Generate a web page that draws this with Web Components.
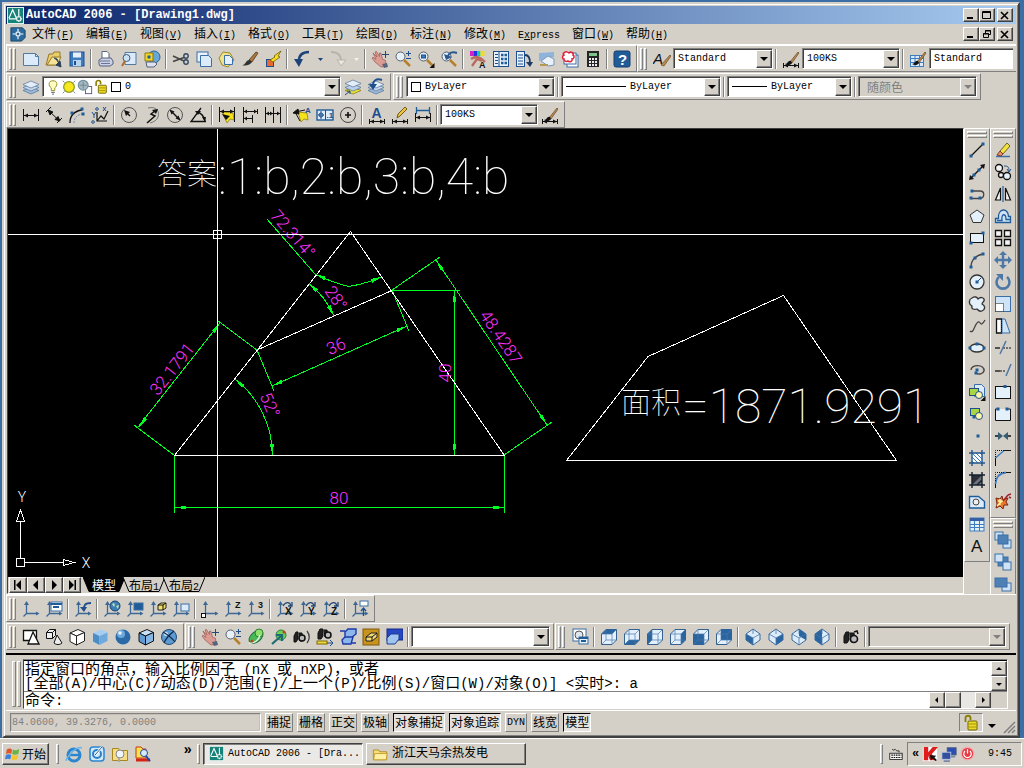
<!DOCTYPE html>
<html lang="zh-CN">
<head>
<meta charset="utf-8">
<title>AutoCAD 2006 - [Drawing1.dwg]</title>
<style>
html,body{margin:0;height:100%}
body{background:#3a6ea5;font:10px/14px "Liberation Mono","Noto Sans CJK SC",monospace;color:#000;overflow:hidden}
</style>
</head>
<body>
<cad-app></cad-app>
<script>
const CJK = /([\u3000-\u9fff\uff00-\uffef]+)/g;
const mix = s => s.replace(CJK, '<span class="c">$1</span>');

const BASE = `
*{box-sizing:border-box}
:host{box-sizing:border-box;display:block}
.c{font-size:12px;font-family:"Noto Sans CJK SC",sans-serif}
button,input,select{font:inherit;color:inherit;margin:0;padding:0;border:0;background:none;border-radius:0}
button{white-space:nowrap}
.up{background:#d4d0c8;border:1px solid;border-color:#fff #404040 #404040 #fff;box-shadow:inset -1px -1px #808080}
svg{display:block;flex:none}
`;

function define(name, css, html) {
  customElements.define(name, class extends HTMLElement {
    constructor() {
      super();
      this.attachShadow({ mode: 'open' });
    }
    connectedCallback() {
      this.shadowRoot.innerHTML = `<style>${BASE}${css}</style>` + (typeof html === 'function' ? html(this) : html);
    }
  });
}

/* ---------- icon set, drawn on an 18 x 18 grid ---------- */
const p = (d, a = '') => `<path d="${d}" ${a}/>`;
const c = (x, y, r, a = '') => `<circle cx="${x}" cy="${y}" r="${r}" ${a}/>`;
const NV = 'stroke="#1f4e8c"', LB = 'fill="#c9e0f8"', MB = 'fill="#4a86c4"', K = 'fill="#111"', NB = 'fill="#1f5c98" stroke="none"';
const dot = (x, y) => `<rect x="${x - 1.5}" y="${y - 1.5}" width="3" height="3" ${NB}/>`;
const brush = p('M8 12 16 2l1 1-7 10z', 'fill="#b98a50" stroke="#6b4a22" stroke-width=".7"') + p('M3 14c3 0 3-4 6-3l1 2c-2 3-5 2-7 1z', K + ' stroke="none"');
const dimbar = p('M1.500 13v5M16.500 13v5M2 15.500h14') + p('M2 15.500l4-2v4zM16 15.500l-4-2v4z', K + ' stroke="none"');
const ucs = p('M4.500 14V3M4.500 13.500H16M4.500 13.500l-3 3', 'stroke="#3d6896" stroke-width="1.300"') + p('M4.500 1 2 5h5zM17.500 13.500 14 11.500v4z', 'fill="#3d6896" stroke="none"');
const layers = p('M9 9 17 12.500 9 16 1 12.500z', 'fill="#9fb9d6" stroke="#50739b" stroke-width=".7"') + p('M9 6 17 9.500 9 13 1 9.500z', 'fill="#c4d6ea" stroke="#50739b" stroke-width=".7"') + p('M9 3 17 6.500 9 10 1 6.500z', 'fill="#e4eef9" stroke="#50739b" stroke-width=".7"');
const hand = p('M2 3l4 4-2-5 1.500-.5 3 5V3l1.500.3 1.500 6 3 1 .5 6-5 .7-6-5-3-4 1-.7 3 2z', 'fill="#dd9c93" stroke="#9b5650" stroke-width=".7"') + p('M11 14l5-1 1 4-4 1z', 'fill="#54657d" stroke="none"');
const mag = p('M10 10l6 6', 'stroke="#b7802c" stroke-width="2.500"') + c(6.500, 6.500, 4.500, 'fill="#e8f0f7" stroke="#555f6c"');
const cross = p('M14.500 1v7M11 4.500h7', 'stroke="#234b78"');
const calc = '<rect x="3" y="1" width="12" height="16" fill="#252525" stroke="none"/><rect x="5" y="3" width="8" height="3" fill="#7fc58a" stroke="none"/>' + p('M5 9h8M5 12h8M5 15h8', 'stroke="#eee" stroke-width="2" stroke-dasharray="2 1"');
const binoc = p('M2 8l2-4h3v8l-2 3H2zM8 5h4l1 9H9z', 'fill="#222"') + c(12, 11, 3.500, 'fill="#bbb" stroke="#111" stroke-width="1.600"');
/* wire cube with one face filled */
const cube = face => {
  const F = { top: 'M1.500 6 6 1.500h10.500L12 6z', bottom: 'M1.500 16.500 6 12h10.500L12 16.500z', left: 'M1.500 6 6 1.500V12l-4.500 4.500z', right: 'M12 6l4.500-4.500V12L12 16.500z', front: 'M1.500 6H12v10.500H1.500z', back: 'M6 1.500h10.500V12H6z' };
  return p('M1.500 6 6 1.500h10.500V12L12 16.500H1.500z', 'fill="#e3f0fd" stroke="#34618f"') + p(F[face], 'fill="#2a659f" stroke="none"') + p('M1.500 6H12v10.500M12 6l4.500-4.500M6 1.500V12h10.500M6 12l-4.500 4.500', 'stroke="#4b7aa9" stroke-width=".7"');
};
/* isometric cube with one face filled */
const iso = d => p('M9 1l7 5v6l-7 5-7-5V6z', 'fill="#dcecfb" stroke="#3c6a9b"') + p(d, 'fill="#2a659f" stroke="none"') + p('M2 6l7 4 7-4M9 10v7M9 1v5', 'stroke="#4677a8" stroke-width=".8"');
const sheet = (x, y, w, h, f = '#fff') => `<rect x="${x}" y="${y}" width="${w}" height="${h}" fill="${f}" stroke="#3a6ea5"/>`;
const box3 = (t, l, r, s) => p('M2 5 10 1.500 16.500 4.500 8.500 8z', `fill="${t}" stroke="${s}"`) + p('M2 5l6.500 3v9L2 13.500z', `fill="${l}" stroke="${s}"`) + p('M8.500 8l8-3.500V13l-8 4z', `fill="${r}" stroke="${s}"`);
const txt = (s, x, y, z, a = '') => `<text x="${x}" y="${y}" font-size="${z}" fill="#111" stroke="none" font-family="Liberation Sans,sans-serif" font-weight="bold" ${a}>${s}</text>`;
const lock = p('M3.500 8V4c0-3 5-3 5 0v2', 'stroke="#8a7d00" stroke-width="1.800"') + '<rect x="6" y="7" width="9" height="9" rx="1" fill="#ecd92b" stroke="#6e6400"/>' + p('M7 10h7M7 13h7', 'stroke="#a59600"');

const ICONS = {
  'new': p('M1.500 3.500h12l3 3v9h-15z', 'fill="#dcebfa" stroke="#557a9f"') + p('M13.500 3.500v3h3', 'stroke="#557a9f"'),
  open: p('M1 15 4 4h4l1-2h6v6l-3 7z', 'fill="#e9cf6a" stroke="#96782a"') + p('M2 15l5-8h9l-4 8z', 'fill="#f4e29b" stroke="#96782a"') + p('M9 8c3 0 4 2 4 4M16 17l-5-2 4-4z', 'fill="#2b3f58" stroke="#2b3f58"'),
  save: '<rect x="2" y="2" width="14" height="14" fill="#3e7cc0" stroke="#1f4e8c"/><rect x="5" y="2.500" width="8" height="5" fill="#e6f1fc" stroke="none"/><rect x="5" y="10" width="8" height="6" fill="#b8d3ef" stroke="none"/><rect x="6" y="11" width="2" height="4" fill="#1f4e8c" stroke="none"/>',
  print: p('M5 8V1.500h5l2 2V9', 'fill="#fff" stroke="#55657f"') + p('M2 10l3-2h9l2 3v3l-3 2H3l-1-2z', 'fill="#ccd2e4" stroke="#55607f"') + p('M3 11h10M4 13.500h9', 'stroke="#687596"'),
  preview: p('M5 2.500h11v12H5z', 'fill="#dbeafa" stroke="#557a9f"') + c(6.500, 8, 3.500, 'fill="#cbe1f4" stroke="#3c5d82"') + p('M5 11l-3 5', 'stroke="#b56a2a" stroke-width="2"'),
  publish: c(11, 7, 6, 'fill="#69a7d9" stroke="#2f6491"') + p('M2 3h8v8H2z', 'fill="#f5d62c" stroke="#8a7a00"') + p('M3 12h9l2 2-3 3H4z', 'fill="#dce1ec" stroke="#55607f"') + dot(6, 7),
  cut: p('M1 6l11 5M1 11.500l11-4', 'stroke="#444" stroke-width="1.500"') + c(14, 6, 2.200, 'stroke="#34495f" stroke-width="1.400"') + c(14, 12, 2.200, 'stroke="#34495f" stroke-width="1.400"'),
  copy: sheet(2, 2, 11, 10, '#eaf3fd') + p('M5.500 5.500h8l3 3v8h-11z', 'fill="#dcebfa" stroke="#3a6ea5"'),
  paste: p('M5 2l7 1 4 7-6 7-6-2-3-7z', 'fill="#f0e28a" stroke="#9b8a2c"') + p('M6.500 5.500h5l3 3v6h-8z', 'fill="#e6f1fc" stroke="#3a6ea5"'),
  match: p('M8 10 15 2l2 1-6 9z', 'fill="#a9793f" stroke="#50371a" stroke-width=".8"') + p('M1 15c4 0 4-6 8-5l2 2c-3 4-7 4-10 3z', 'fill="#333" stroke="none"'),
  blockedit: '<rect x="2.500" y="9.500" width="7" height="7" fill="#e86a32" stroke="#1f4e8c"/>' + p('M6 10l5-3-1-1 7-5-3 5 2 1-7 5z', 'fill="#f8df22" stroke="#6d5c00" stroke-width=".8"'),
  undo: p('M16 2C8 2 6 6 6 11', 'stroke="#1d4378" stroke-width="2.600"') + p('M1 9h9l-4 8z', 'fill="#1d4378" stroke="none"'),
  redo: p('M2 2c8 0 10 4 10 9', 'stroke="#b8b4ac" stroke-width="2"') + p('M8 10h9l-5 6z', 'fill="#e8e6e0" stroke="#b8b4ac"'),
  drop: p('M7 8h5l-2.500 3z', 'fill="#1d4378" stroke="none"'),
  dropoff: p('M7 8h5l-2.500 3z', 'fill="#f4f2ee" stroke="none"'),
  pan: hand + cross, zoomrt: mag + p('M14.500 1v5M12 3.500h5M12 8.500h5', NV),
  zoomwin: mag + '<rect x="4.500" y="5" width="4" height="3" fill="#3e7cc0" stroke="#1f4e8c"/>' + p('M17.500 13v5h-5z', K + ' stroke="none"'),
  zoomprev: mag + p('M17 3c-5-2-8 0-9 3', 'stroke="#2a5790" stroke-width="2"') + p('M4 4l2 6 6-3z', 'fill="#2a5790" stroke="none"'),
  props: '<rect x="1" y="1" width="3.500" height="5" fill="#d223c8" stroke="none"/><rect x="4.500" y="1" width="3.500" height="5" fill="#2233dd" stroke="none"/><rect x="8" y="1" width="3.500" height="5" fill="#18c8b0" stroke="none"/><rect x="11.500" y="1" width="4" height="5" fill="#f0dc20" stroke="none"/>' + p('M2 9c5-3 8-3 14 3M3 16l5-7 5 2', 'stroke="#b96b5c" stroke-width="2.400"') + txt('A', 10, 17.500, 9),
  dc: '<rect x="1.500" y="1.500" width="15" height="15" fill="#e6f1fc" stroke="#1f4e8c"/>' + p('M7 2v14M3 4.500h3M3 7.500h3M3 10.500h3M3 13.500h3', NV) + '<path d="M9 5h6M9 9h6M9 13h6" stroke="#1f5c98" stroke-width="2.400" stroke-dasharray="2.500 1"/>',
  palettes: '<rect x="1.500" y="1.500" width="8" height="15" fill="#e6f1fc" stroke="#1f4e8c"/>' + p('M3 5h5M3 8h5M3 11h5M3 14h5', NV) + p('M10 5c4 0 5 3 5 8', 'stroke="#1d3a66" stroke-width="1.800"') + p('M11 12h7l-3 5z', 'fill="#1d3a66" stroke="none"'),
  sheetset: p('M1 3l15-1v5L1 11z', 'fill="#8fb4dc" stroke="none"') + p('M3 11l7-5 6 3v6l-6 1z', 'fill="#e9f1fa" stroke="#7e97b5"') + p('M2 15h8', 'stroke="#b59a55" stroke-width="2"'),
  markup: sheet(6, 5, 11, 12) + sheet(3, 3, 12, 11) + p('M3 3c2-2 4-1 5 0 2-2 5 0 4 2 2 1 1 4-1 4 1 3-3 3-4 2-2 1-4 0-4-2-2 0-2-3 0-4-1-1-1-2 0-2z', 'fill="#fff" stroke="#e0203c" stroke-width="1.500"'),
  calc, help: '<rect x="1" y="1" width="16" height="16" rx="2" fill="#1f5c98" stroke="#183f70"/>' + txt('?', 5, 15, 15, 'style="fill:#fff"'),
  textstyle: txt('A', 0, 14, 15, 'style="font-weight:normal" font-style="italic"') + p('M8 15 17 5l1 1-7 10z', 'fill="#b98a50" stroke="#6b4a22" stroke-width=".7"'),
  dimstyle: brush + dimbar,
  tablestyle: '<rect x="1.500" y="5.500" width="13" height="11" fill="#dcebfa" stroke="#3e7cc0"/>' + p('M1 8.500h14M1 12.500h14M6 5v12M10.500 5v12', 'stroke="#3e7cc0"') + brush,
  layers, layprev: layers + p('M15 2C9 0 6 3 6 7', 'stroke="#1f4e8c" stroke-width="2"') + p('M2 6h8l-4 6z', 'fill="#1f4e8c" stroke="none"'),
  laycur: p('M9 9 17 12.500 9 16 1 12.500z', 'fill="#e9df34" stroke="#8a8220" stroke-width=".8"') + p('M9 6 17 9.500 9 13 1 9.500z', 'fill="#bcd2ea" stroke="#50739b" stroke-width=".7"') + p('M9 2 17 5.500 9 9 1 5.500z', 'fill="#e4eef9" stroke="#50739b" stroke-width=".7"') + p('M1 17l5-4M3 13h3v3', NV),
  bulb: p('M9 2c-6 0-5 6-2 8v3h4v-3c3-2 4-8-2-8z', 'fill="#fffcc0" stroke="#8c8420"') + p('M7 15h4M8 17h2', 'stroke="#444"'),
  sun: c(9, 9, 6, 'fill="#f6e71f" stroke="#8f9b1c" stroke-width="1.400"') + p('M2 2l2 2M16 2l-2 2M2 16l2-2M16 16l-2-2', 'stroke="#5b7a9a"'),
  freeze: '<rect x="9.500" y="8.500" width="7" height="8" fill="#fff" stroke="#557"/>' + c(7, 7, 5.500, 'fill="#a7b9c0" stroke="#7494a2" stroke-width="1.400"') + p('M7 3v8M3 7h8', 'stroke="#6a8793"'),
  lock, lin: p('M1.500 3v12M16.500 3v12M2 9.500h14') + p('M2 9.500l4-2v4zM16 9.500l-4-2v4z', K + ' stroke="none"'),
  aligned: p('M1 6l5-5M12 17l5-5M3.500 4.500l10.500 10') + p('M3 4l5 2-3 3zM15 15l-5-1.500 3-3z', K),
  arclen: p('M2 17c0-8 5-12 12-13', 'stroke-width="1.300"') + p('M6 17c0-5 3-8 8-9', 'stroke="#7391b0" stroke-dasharray="2 1"') + dot(4, 7) + dot(14, 3) + dot(15, 8),
  ordinate: p('M6 6v9h10M6 15l4-5 3 3 4-8', 'stroke-width="1.200"') + c(6, 3, 1.300, NV) + c(2, 16, 1.300, NV) + p('M12 1l3 4M15 1l-3 4M1 6l2 3M5 6l-2 3v3', NV),
  radius: c(9, 9, 7.500, 'stroke="#555"') + p('M10 10 6 6', 'stroke-width="1.500"') + p('M4 4l6 2-4 4z', K + ' stroke="none"'),
  jogged: p('M5 2c8-2 12 3 10 9-1 3-4 5-8 6', 'stroke="#777"') + p('M13 4 8 8l4 2-8 7', 'stroke-width="1.500"') + p('M15 3l-6 1 4 4z', K + ' stroke="none"'),
  diameter: c(9, 9, 7.500, 'stroke="#555"') + p('M5 5l8 8', 'stroke-width="1.500"') + p('M3.500 3.500l5 2-3 3zM14.500 14.500l-5-2 3-3z', K + ' stroke="none"'),
  angular: p('M12 2 2 15.500h15M8 6c4 1 7 4 8 9', 'stroke-width="1.300"') + p('M6 5l6 0-3 4zM16 16l-3-5h4z', K + ' stroke="none"'),
  quick: p('M4 6l11 1 1 7-4-1-3 4z', 'fill="#f5e11c" stroke="#8a7a00" stroke-width=".7"') + p('M1.500 1v15M16.500 1v15M2 5.500h14') + p('M2 5.500l4-2v4zM16 5.500l-4-2v4zM4 8l8 2-4 4z', K + ' stroke="none"'),
  baseline: p('M2.500 1v16M3 5.500h13M3 12.500h8M16.500 3v5M11.500 9v8') + p('M3 5.500l3-2v4zM16 5.500l-3-2v4zM3 12.500l3-2v4z', K + ' stroke="none"'),
  cont: p('M1.500 1v16M9.500 1v16M16.500 1v16M2 7.500h15') + p('M2 7.500l3-2v4zM9 7.500l-3-2v4zM16 7.500l-3-2v4z', K + ' stroke="none"'),
  leader: p('M5 6l9 1 1 7-4-1-3 3z', 'fill="#f5e11c" stroke="#8a7a00" stroke-width=".7"') + p('M12 4 2 6l5 9') + p('M0 7l5-4 1 5z', K) + txt('A', 12, 7, 8, 'style="fill:#1f4e8c"'),
  tolerance: '<rect x="1" y="4" width="16" height="10" fill="#dcecfb" stroke="#1f5c98" stroke-width="1.400"/>' + p('M9.500 4v10M2 9h6M5 5v8', NV) + c(5, 9, 2, NV) + txt('.1', 10.500, 12, 8, 'style="fill:#1f4e8c"'),
  center: c(9, 9, 7.500, 'stroke="#444"') + p('M9 6v6M6 9h6', 'stroke-width="1.600"'),
  dimedit: txt('A', 3.500, 12, 14, 'style="fill:#1f4e8c"') + dimbar,
  dimtedit: p('M6 12l1-4 7-7 2 2-7 7z', 'fill="#e9c43c" stroke="#705b15"') + dimbar,
  dimupdate: p('M2.500 1v7M15.500 1v7M3 4.500h12', 'stroke="#1f5c98" stroke-width="1.300"') + p('M1.500 7v9M16.500 7v9M2 11.500h14') + p('M2 11.500l4-2v4zM16 11.500l-4-2v4z', K + ' stroke="none"'),
  line: p('M3 15 15 3', 'stroke-width="1.300"') + dot(3, 15) + dot(15, 3),
  xline: p('M3 15 15 3', 'stroke-width="1.500"') + p('M1 17l1-5 4 4zM17 1l-5 1 4 4z', K + ' stroke="none"') + dot(6, 12) + dot(11, 7),
  pline: p('M3 13.500h8M5 6h7c5 0 5 7 0 7.500', 'stroke="#444" stroke-width="1.300"') + dot(3, 13) + dot(12, 13) + dot(4, 6),
  polygon: p('M9 3l7 5-3 7.500H5L2 8z', 'fill="#e4f1fb" stroke="#333"'),
  rect: '<rect x="2.500" y="4.500" width="13" height="9" fill="#e4f1fb"/>' + dot(3, 14) + dot(15, 4),
  arc: p('M3 16C3 9 8 4 15 3', 'stroke="#444" stroke-width="1.300"') + dot(3, 16) + dot(7, 7) + dot(15, 3),
  circle: c(9, 9, 7, 'fill="#e4f1fb" stroke="#333" stroke-width="1.300"') + p('M9 9l4-4', NV) + dot(9, 9),
  cloud: p('M4 3c3-2 5-1 6 1 3-3 7-1 6 2-1 1-2 2-2 3 4 2 3 6 0 7-3 1-4-1-5-2-3 1-6 0-5-3-4-2-3-7 0-8z', 'fill="#e4f1fb" stroke="#333" stroke-width="1.300"'),
  spline: p('M2 14c4 4 5-10 9-9 2 1 2 5 6-2', 'stroke="#444" stroke-width="1.300"'),
  ellipse: '<ellipse cx="9" cy="9" rx="7" ry="4" fill="#e4f1fb" stroke="#333" stroke-width="1.300"/>' + dot(2, 9) + dot(16, 9) + dot(9, 5),
  ellarc: p('M3 9c0-6 14-6 13 1-1 3-5 4-8 2', 'stroke="#444" stroke-width="1.400"') + dot(9, 9) + dot(8, 12),
  insert: p('M6.500 1.500h7l3 3v9h-10z', 'fill="#dcebfa" stroke="#3a6ea5"') + '<rect x="1.500" y="5.500" width="9" height="7" fill="#a9d645" stroke="#1f4e8c"/>' + c(11, 12, 3.500, 'fill="#fff8a8" stroke="#1f4e8c"') + p('M17.500 13v5h-5z', K + ' stroke="none"'),
  block: '<rect x="2.500" y="3.500" width="9" height="7" fill="#a9d645" stroke="#1f4e8c"/>' + c(11, 11, 3.500, 'fill="#fff8a8" stroke="#1f4e8c"') + dot(6, 12),
  point: dot(10, 9),
  hatch: '<rect x="4" y="4" width="10" height="10" fill="#fff" stroke="none"/>' + p('M4 8l6 6M4 4l10 10M8 4l6 6M4 12l2 2M12 4l2 2', 'stroke="#3e7cc0"') + p('M4 1v16M14 1v16M1 4h16M1 14h16', 'stroke="#23568c" stroke-width="1.400"'),
  gradient: '<rect x="4" y="4" width="10" height="10" fill="#6d7178" stroke="none"/>' + p('M4 14V4h10z', 'fill="#2b3039" stroke="none"') + p('M4 1v16M14 1v16M1 4h16M1 14h16M9 14l5-5', 'stroke="#14202f" stroke-width="1.400"'),
  region: p('M1.500 3.500h9l6 5v6.500h-15z', 'fill="#dcebfa" stroke="#1f5c98" stroke-width="1.400"') + c(8, 9, 3, 'fill="#eee" stroke="#444"'),
  table: '<rect x="2" y="3" width="14" height="13" fill="#e4f1fb" stroke="#3e7cc0"/><rect x="2" y="3" width="14" height="3" fill="#3560a4" stroke="none"/>' + p('M2 9.500h14M2 12.500h14M6.500 6v10M11.500 6v10', 'stroke="#3e7cc0"'),
  mtext: '<text x="3" y="15" font-size="17" fill="#111" stroke="none" font-family="Liberation Sans,sans-serif">A</text>',
  erase: p('M2 15.500h14', 'stroke="#3e6ea8" stroke-width="1.500"') + p('M6 10 13 2l3 3-7 8z', 'fill="#f4e13c" stroke="#6f6520"') + p('M6 10l3 3-2 2-4-1z', 'fill="#e89070" stroke="#7a3c22"'),
  copyo: c(5, 5, 3.500, 'fill="#f4f4f4" stroke-width="1.300"') + c(7, 12, 2.500, 'fill="#f4f4f4" stroke-width="1.300"') + c(13, 13, 3.500, 'fill="#e4f1fb" stroke-width="1.300"') + p('M10 3c4 0 5 1 5 5M13 6l2 3 2-3', NV),
  mirror: p('M9 1v16', 'stroke="#3a6ea5" stroke-width="1.400"') + p('M6.500 3v12h-5zM11.500 3v12h5z', 'fill="#f4f4f4" stroke-width="1.200"'),
  offset: p('M1.500 15.500v-4h3c-1-11 10-11 10-2h2v6z', 'fill="#cfe3f7" stroke="#1f5c98" stroke-width="1.300"') + p('M3 13.500h5c-1-8 4-7 4-1h4', 'stroke="#1f5c98" stroke-width="1.300"'),
  array: p('M1.500 1.500h6v6h-6zM10.500 1.500h6v6h-6zM1.500 10.500h6v6h-6zM10.500 10.500h6v6h-6z', 'fill="#f4f4f4" stroke="#111" stroke-width="1.300"'),
  move: p('M9 2v14M2 9h14', 'stroke="#4d77a6" stroke-width="2.400"') + p('M9 0l4 4H5zM9 18l4-4H5zM0 9l4-4v8zM18 9l-4-4v8z', 'fill="#4d77a6" stroke="none"'),
  rotate: p('M5 4a6.500 6.500 0 1 0 8 0', 'stroke="#4d77a6" stroke-width="2.600"') + p('M2 1h7v7z', 'fill="#4d77a6" stroke="none"'),
  scale: '<rect x="1.500" y="1.500" width="15" height="15" fill="#cfe3f7" stroke="#3a6ea5"/><rect x="1.500" y="8.500" width="8" height="8" fill="#fff" stroke="#111" stroke-dasharray="1 1"/>',
  stretch: p('M2.500 2v14h5V2z', 'fill="#fff" stroke-width="1.300"') + p('M8 2h3l5 14H8z', 'fill="#cfe3f7" stroke="#3a6ea5"') + p('M7.500 2v14', 'stroke-dasharray="1 1"'),
  trim: p('M1 9h5', 'stroke-width="1.300"') + p('M9 9h9', 'stroke-dasharray="2 1"') + p('M12 2 6 15', 'stroke="#4d77a6" stroke-width="1.500"'),
  extend: p('M1 10h5', 'stroke-width="1.300"') + p('M6 10h6', 'stroke-dasharray="2 1"') + p('M17 3l-5 12', 'stroke="#4d77a6" stroke-width="1.500"'),
  breakpt: '<rect x="1.500" y="3.500" width="15" height="12" fill="#e4f1fb"/>' + dot(11, 3.500),
  brk: p('M5 4H1.500v11.500h15V4H13', 'fill="#e4f1fb"') + dot(4, 4) + dot(13, 4),
  join: p('M1 9h4M13 9h4', 'stroke-width="1.500"') + p('M4 5l5 4-5 4zM14 5l-5 4 5 4z', 'fill="#345c75" stroke="none"'),
  chamfer: p('M1.500 17V9M10 1.500h7') + p('M1.500 9 10 1.500', 'stroke="#3e7cc0" stroke-width="1.500"') + p('M1.500 8V1.500H10', 'stroke-dasharray="1 1"'),
  fillet: p('M1.500 17v-4M12 1.500h5') + p('M1.500 13C2 6 6 2 12 1.500', 'stroke="#3e7cc0" stroke-width="1.800"') + p('M1.500 10V1.500H10', 'stroke-dasharray="1 1"'),
  explode: p('M2 5l4 1 2-3 1 4 5-2-2 4 2 3-4 0-1 4-3-3-4 2 1-4z', 'fill="#e8782c" stroke="#7b2414"') + p('M4 8h5M6 6v6M3 13l5-5', 'stroke="#fff4a0" stroke-width="1.400"') + p('M9 8l5-6M14 2l3-1M15 4l2 1', 'stroke="#a3212d" stroke-width="1.500"'),
  front: sheet(1, 1, 8, 8, '#cfe3f7') + sheet(9, 9, 8, 8, '#cfe3f7') + sheet(4, 4, 10, 9, '#4f80b5'),
  backo: sheet(4, 4, 10, 9, '#4f80b5') + sheet(1, 1, 8, 8, '#cfe3f7') + sheet(9, 9, 8, 8, '#cfe3f7'),
  above: sheet(8, 8, 9, 8, '#cfe3f7') + sheet(1, 3, 12, 9, '#4f80b5'),
  ucs, ucsdlg: ucs + sheet(6, 2, 11, 9) + p('M6 4h11M8 7h6', 'stroke="#1f5c98" stroke-width="2"'),
  ucsprev: ucs + p('M17 3c-6 0-7 2-7 6', 'stroke="#1f4e8c" stroke-width="1.800"') + p('M6 7h7l-3 5z', 'fill="#1f4e8c" stroke="none"'),
  world: ucs + c(12, 6, 5, 'fill="#3b7fb5" stroke="#183f70"') + p('M9 4c2-2 4 0 2 3zM13 6l3-1-1 4z', 'fill="#bfe0b4" stroke="none"'),
  ucsobj: ucs + sheet(8, 3, 9, 7, '#1f5c98'),
  ucsface: ucs + p('M9 5l3-2h5v5l-3 2H9z', 'fill="#f2df6a" stroke="#222"') + p('M9 5h5v5M14 5l3-2'),
  ucsview: ucs + sheet(9, 4, 8, 7, '#dcebfa'),
  origin: ucs + '<rect x=".5" y="13.500" width="4" height="4" fill="#fff"/>',
  zaxis: ucs + txt('Z', 11, 8, 9), point3: ucs + txt('3', 11, 8, 9),
  ...Object.fromEntries(['X', 'Y', 'Z'].map(a => ['rot' + a, ucs + p('M7 6c3-5 7-4 8 0M16 2v4h-4', 'stroke="#234b78" stroke-width="1.300"') + txt(a, 9, 15, 10)])),
  ucsapply: ucs + sheet(9, 1, 8, 5) + p('M12.500 16V8M10 11l2.500-3 2.500 3', 'stroke="#1f4e8c" stroke-width="1.400"'),
  wire2: p('M1.500 2.500h13v10h-13z', 'fill="#fff" stroke-width="1.300"') + p('M11 4l6 12H6z', 'fill="#fff" stroke-width="1.300"'),
  wire3: p('M1.500 4.500h6v6h-6zM1.500 4.500l3-3h6v6l-3 3M7.500 4.500l3-3M12 7l5 8c-2 2-6 2-8 0z', 'fill="#eee"'),
  hidden: box3('#fff', '#fff', '#fff', '#222'), flat: box3('#a6cef2', '#4a8cc8', '#6faadf', 'none'),
  gouraud: c(9, 9, 7.500, 'fill="#2b6aa6" stroke="none"') + c(7, 6, 4, 'fill="#6fa9dc" stroke="none"') + c(6, 5, 1.800, 'fill="#e8f4ff" stroke="none"'),
  flatedge: box3('#c6e0f7', '#5f9bd2', '#84b7e4', '#111'),
  gouraudedge: c(9, 9, 7.500, 'fill="#5d9ad0" stroke="#234b78"') + c(6, 6, 2, 'fill="#d9ebfb" stroke="none"') + p('M3 4c5 3 9 6 12 10M14 3c-5 4-8 7-10 12', 'stroke="#10294a" stroke-width="1.200"'),
  orbit: '<ellipse cx="9" cy="9" rx="8" ry="5" transform="rotate(-40 9 9)" fill="#48b954" stroke="#1d7040"/>' + c(12, 5, 4, 'fill="#8ee06a" stroke="#27803a"') + p('M2 15c5 1 10-3 11-8', 'stroke="#e5f7e8" stroke-width="1.400"') + c(5, 13, 1.500, 'fill="#b8461c" stroke="none"'),
  corbit: c(11, 7, 5, 'fill="#6fcf57" stroke="#27803a"') + p('M2 16l9-8M6 7l6 0v6', 'stroke="#1d6b73" stroke-width="2.200"') + c(14, 4, 1.500, 'fill="#b8461c" stroke="none"'),
  swivel: p('M1 8l2-4h2v7l-2 3H1zM6 5h3l1 8H7z', 'fill="#222"') + c(9, 10, 3, 'fill="#bbb" stroke="#111" stroke-width="1.500"') + p('M14 3c3 4 3 8 0 12', 'stroke="#444" stroke-width="1.300"'),
  distance: p('M2 5l2-4h3v7l-2 3H2zM8 2h3l1 7H9z', 'fill="#222"') + c(12, 7, 3, 'fill="#bbb" stroke="#111" stroke-width="1.500"') + '<rect x="1" y="13" width="10" height="3" fill="#f0d83c" stroke="#7a6a00"/>' + p('M11 15h6M14 12l3 3-3 3', NV),
  clip: p('M6 4l3-3h8v5l-4 3H6zM3 12l3-3h8l-2 7H4z', 'fill="#8db7ec" stroke="#1b39a8" stroke-width="1.400"') + p('M1 3h5M17 15h-4', 'stroke="#1b39a8" stroke-width="1.400"'),
  frontclip: '<rect x="1" y="1" width="16" height="16" fill="#c8931d" stroke="#7c5909"/>' + p('M4 9l5-4h6v4l-5 4H4z', 'fill="#f3d877" stroke="#222"') + p('M4 9h6v4M10 9l5-4'),
  backclip: '<rect x="2" y="1" width="16" height="11" fill="#2747c4" stroke="#132b82"/>' + p('M2 10l4-4h8v5l-4 5H2z', 'fill="#9fc4ee" stroke="#1c3f93"'),
  namedv: sheet(2, 1, 13, 12) + c(8, 7, 4, 'fill="#dfe6ee" stroke="#555"') + sheet(8, 9, 9, 7, '#e6f1fc') + p('M8 10h9M10 13h5', 'stroke="#1f5c98" stroke-width="1.800"'),
  top: cube('top'), bottom: cube('bottom'), left: cube('left'), right: cube('right'), frontv: cube('front'), backv: cube('back'),
  sw: iso('M2 6l7 4v7l-7-5z'), se: iso('M16 6l-7 4v7l7-5z'), ne: iso('M9 1l7 5v6L9 8z'), nw: iso('M9 1L2 6v6l7 5z'),
  camera: binoc + p('M12 4l3-1 1 3', 'stroke-width="1.500"'),
  cad: '<rect width="18" height="18" fill="#eef6f4" stroke="none"/><rect x="1" y="1" width="16" height="16" fill="#16837a" stroke="none"/>' + p('M2 12 6 3l4 9M2 12.500h14M12.500 2v14', 'stroke="#fff" stroke-width="1.300"') + '<rect x="10.500" y="10.500" width="4" height="4" stroke="#fff" fill="#16837a"/>',
  dwg: p('M1 2h13l3 3v8l-4 4H1z', 'fill="#2a6a9e" stroke="#123f68"') + p('M9 3v12M3 9h12', 'stroke="#fff" stroke-width="1.300"') + '<rect x="7" y="7" width="4" height="4" fill="#2a6a9e" stroke="#fff"/>',
  ie: c(9, 10, 6, 'stroke="#2c85cf" stroke-width="3"') + p('M4 10h10', 'stroke="#2c85cf" stroke-width="2.400"') + p('M2 15C-2 18 10 0 17 3', 'stroke="#67b5ea" stroke-width="1.500"'),
  desktop: '<rect x="2" y="2" width="14" height="14" rx="3" fill="#cfe9fb" stroke="#2c85cf" stroke-width="1.500"/>' + c(9, 9, 4, 'stroke="#2c7fc4" stroke-width="2"') + p('M7 10l7-8', 'stroke="#fff" stroke-width="2.400"') + p('M7 10l7-8', 'stroke="#265f95"'),
  folder: p('M1.500 4.500h6l1 2h8v9h-15z', 'fill="#fbe07a" stroke="#a8861e"') + p('M3 8.500h14l-1 7H2z', 'fill="#fff0a6" stroke="#c49b28"'),
  findfolder: p('M1.500 3.500h6l1 2h8v10h-15z', 'fill="#f6dd84" stroke="#a8861e"') + c(9, 9, 4, 'fill="#eef6fb" stroke="#888"') + p('M8 13v4', 'stroke="#aaa" stroke-width="2"'),
  findred: p('M2 2h5l2 2h3v9H2z', 'fill="#fbe34a" stroke="#c23b16"') + c(10, 8, 3.500, 'fill="#d7ecfb" stroke="#2244aa"') + p('M2 15h14', 'stroke="#d42416" stroke-width="3"') + p('M12 11l4 5', 'stroke="#2244aa" stroke-width="2"'),
  flag: p('M2 4c3-2 4-1 6 0L7 9C5 8 4 8 1 9z', 'fill="#e2552b" stroke="none"') + p('M9 4c2 1 4 1 7-1l-1 6c-3 1-5 1-7 0z', 'fill="#6cb33f" stroke="none"') + p('M1 10c2-1 4-1 6 0l-1 5c-2-1-4-1-6 0z', 'fill="#3e7fd9" stroke="none"') + p('M8 10c2 1 4 1 7 0l-1 5c-3 1-5 1-7 0z', 'fill="#f4c62c" stroke="none"'),
  keyboard: p('M4 3l2 1 2-1 2 2h3v2') + '<rect x="1" y="8" width="16" height="8" fill="#f4f4f4"/>' + p('M3 10.500h13M3 13.500h13', 'stroke-width="1.600" stroke-dasharray="2 1"'),
  kav: '<rect x="1" y="1" width="16" height="16" fill="#fff" stroke="none"/>' + p('M2 1h5v6l5-6h6l-7 8 4 7H9L7 11v5H2z', 'fill="#e01b1b" stroke="none"') + p('M9 10l7 1-2 2 3 3-2 1-3-3-2 2z', K + ' stroke="none"'),
  net: '<rect x="7" y="2" width="10" height="8" fill="#2a4fb3" stroke="#46557e"/><rect x="1" y="7" width="10" height="8" fill="#33509f" stroke="#c0c8e0"/>' + p('M3 17h7M11 12h5', 'stroke="#7a86a8" stroke-width="2"'),
  power: c(9, 9, 7.500, 'fill="#e63a45" stroke="#f7a8ac" stroke-width="1.500"') + p('M6 6a4.500 4.500 0 1 0 6 0M9 4v5', 'stroke="#fff" stroke-width="1.500"'),
};
const svg = (name, size = 18) => `<svg width="${size}" height="${size}" viewBox="0 0 18 18" fill="none" stroke="#111" aria-hidden="true">${ICONS[name] || ''}</svg>`;

/* ---------- small parts ---------- */
define('cad-tool', `
:host{flex:none;width:var(--tool-w,23px);height:var(--tool-h,23px)}
:host([slim]){width:13px}
button{width:100%;height:100%;display:flex;align-items:center;justify-content:center}
`, el => `<button type="button" aria-label="${el.getAttribute('name')}">${svg(el.getAttribute('name'))}</button>`);

define('cad-sep', `
:host{flex:none;width:2px;height:20px;margin:0 2px;border-left:1px solid #808080;border-right:1px solid #fff}
`, '');

define('cad-toolbar', `
:host{display:flex;align-items:center;flex:none;height:27px;padding:0 3px 0 1px;border:1px solid;border-color:#fff #808080 #808080 #fff}
:host([fill]){flex:1 1 0;min-width:0;overflow:hidden;border-right:0}
:host([column]){flex-direction:column;height:auto;width:26px;padding:2px 0 4px;--tool-w:24px;--tool-h:22px}
.grip{flex:none;display:flex;gap:1px;margin:0 3px 0 1px}
.grip i{display:block;width:3px;height:22px;border:1px solid;border-color:#fff #808080 #808080 #fff}
:host([column]) .grip{flex-direction:column;margin:0 0 1px}
:host([column]) .grip i{width:20px;height:3px}
`, `<div class="grip"><i></i><i></i></div><slot></slot>`);

define('cad-combo', `
:host{flex:none;display:flex;align-items:center;width:var(--w,98px);height:21px;padding-left:2px;background:#fff;border:1px solid;border-color:#808080 #fff #fff #808080;box-shadow:inset 1px 1px #404040}
:host([off]){background:#d4d0c8;color:#808080}
:host([cut]){flex:1 1 0;min-width:0;border-right:0}
:host([cut]) .up{display:none}
select{flex:1;min-width:0;height:17px;appearance:none;padding:0 2px;outline:0;opacity:1;color:inherit}
:host([off]) select{font-size:12px;font-family:"Noto Sans CJK SC",sans-serif;padding-left:6px}
.up{flex:none;width:16px;height:18px;display:flex;align-items:center;justify-content:center}
.up::after{content:"";border:4px solid transparent;border-top-color:#000;border-bottom:0}
:host([off]) .up::after{border-top-color:#808080}
`, el => `<slot></slot><select aria-label="${el.getAttribute('label')}"${el.hasAttribute('off') ? ' disabled' : ''}><option>${el.getAttribute('value') || ''}</option></select><span class="up"></span>`);

define('cad-winbuttons', `
:host{display:flex;flex:none;padding-right:3px}
button{width:16px;height:14px;display:flex;align-items:center;justify-content:center}
button:last-child{margin-left:2px}
`, el => {
  const g = d => `<svg width="10" height="9" viewBox="0 0 10 9" fill="none" stroke="#000">${d}</svg>`;
  const mid = el.hasAttribute('mdi')
    ? g('<path d="M3.500 4V.5h5v4H7M3 1h6M1.500 3.500h5v4h-5zM1 4h6"/>')
    : g('<path d="M.5.5h8v7h-8zM0 1.500h9"/>');
  return `<button class="up" aria-label="minimize">${g('<path d="M1 7h6" stroke-width="2"/>')}</button>
<button class="up" aria-label="restore">${mid}</button>
<button class="up" aria-label="close">${g('<path d="M1 1l7 7M8 1 1 8" stroke-width="1.600"/>')}</button>`;
});

/* ---------- window parts ---------- */
define('cad-titlebar', `
:host{display:flex;align-items:center;height:18px;flex:none;padding-left:1px;background:linear-gradient(90deg,#0a246a,#a6caf0);color:#fff}
h1{margin:0 auto 0 2px;font-size:12px;line-height:18px;font-weight:bold}
cad-winbuttons{color:#000}
`, `${svg('cad', 17)}<h1>AutoCAD 2006 - [Drawing1.dwg]</h1><cad-winbuttons></cad-winbuttons>`);

define('cad-menubar', `
:host{display:flex;align-items:center;height:20px;flex:none;padding-left:4px}
nav{display:flex;align-items:baseline;margin-right:auto}
button{width:54px;height:18px;line-height:18px;text-align:center}
u{text-underline-offset:1px}
`, () => svg('dwg', 16) + '<nav>' +
  [['文件', 'F'], ['编辑', 'E'], ['视图', 'V'], ['插入', 'I'], ['格式', 'O'], ['工具', 'T'], ['绘图', 'D'], ['标注', 'N'], ['修改', 'M'], null, ['窗口', 'W'], ['帮助', 'H']]
    .map(m => m ? `<button type="button">${mix(m[0])}(<u>${m[1]}</u>)</button>` : '<button type="button">E<u>x</u>press</button>').join('') +
  '</nav><cad-winbuttons mdi></cad-winbuttons>');

/* "a b | c" becomes tools and separators */
const tools = s => s.split(' ').map(n => n === '|' ? '<cad-sep></cad-sep>' : n.startsWith('drop') ? `<cad-tool slim name="${n}"></cad-tool>` : `<cad-tool name="${n}"></cad-tool>`).join('');

define('cad-topbars', `
:host{flex:none;border-top:1px solid #fff}
.row{display:flex;height:27px;margin-bottom:1px}
.row:last-child{margin-bottom:0}
.row.loose{gap:2px}
.box{flex:none;width:10px;height:10px;border:1px solid #000;margin:0 2px}
.line{flex:none;height:1px;background:#000;margin:0 2px}
`, `
<div class="row">
<cad-toolbar>${tools('new open save | print preview publish | cut copy paste match blockedit | undo drop redo dropoff | pan zoomrt zoomwin zoomprev | props dc palettes sheetset markup calc | help')}</cad-toolbar>
<cad-toolbar fill>${tools('textstyle')}<cad-combo label="文字样式" value="Standard" style="--w:100px"></cad-combo><cad-sep></cad-sep>${tools('dimstyle')}<cad-combo label="标注样式" value="100KS" style="--w:98px"></cad-combo><cad-sep></cad-sep>${tools('tablestyle')}<cad-combo cut label="表格样式" value="Standard"></cad-combo></cad-toolbar>
</div>
<div class="row loose">
<cad-toolbar>${tools('layers')}<cad-combo label="图层" value="0" style="--w:299px">${['bulb', 'sun', 'freeze', 'lock'].map(n => svg(n, 16)).join('')}<span class="box"></span></cad-combo>${tools('laycur layprev')}</cad-toolbar>
<cad-toolbar><cad-combo label="颜色" value="ByLayer" style="--w:149px"><span class="box"></span></cad-combo><cad-sep></cad-sep><cad-combo label="线型" value="ByLayer" style="--w:160px"><span class="line" style="width:60px"></span></cad-combo><cad-sep></cad-sep><cad-combo label="线宽" value="ByLayer" style="--w:125px"><span class="line" style="width:35px"></span></cad-combo><cad-sep></cad-sep><cad-combo off label="打印样式" value="随颜色" style="--w:119px"></cad-combo></cad-toolbar>
</div>
<div class="row">
<cad-toolbar>${tools('lin aligned arclen ordinate | radius jogged diameter angular | quick baseline cont | leader tolerance center | dimedit dimtedit dimupdate |')}<cad-combo label="标注样式控制" value="100KS" style="--w:98px"></cad-combo>${tools('dimstyle')}</cad-toolbar>
</div>`);

/* model space: geometry is given in window pixels and shifted into the view */
const arrow = (x, y, deg) => `<path transform="translate(${x} ${y}) rotate(${deg})" d="M0 0l11-2v4z" fill="#0f2" stroke="none"/>`;
const dim = (s, x, y, deg) => `<text transform="translate(${x} ${y}) rotate(${deg})" y="6" text-anchor="middle">${s}</text>`;
define('cad-drawing', `
:host{flex:1 1 0;min-height:0;background:#000;overflow:hidden}
svg{width:100%;height:100%}
text{font-family:Roboto,"Liberation Sans",sans-serif;font-weight:100;stroke:none}
.big text{font-size:50px;fill:#fff}
.big .area{font-size:48px}
.big .h{font-size:30px;font-family:"Noto Sans CJK SC",sans-serif}
.dims text{font-size:17px;font-weight:300;fill:#f3f}
.axis text{font-size:14px;font-weight:300;fill:#fff;text-anchor:middle}
`, `
<svg role="img" aria-label="模型空间" fill="none" shape-rendering="crispEdges">
<svg x="-8" y="-129" width="1400" height="1200" overflow="visible">
<g class="big"><text class="h" x="157" y="184">答案</text><text x="218" y="194">:1:b,2:b,3:b,4:b</text>
<text class="h" x="621" y="413">面积</text><text class="area" x="682" y="423">=1871.9291</text></g>
<g stroke="#0f2">
<path d="M174.500 456v57M504.500 456v57M175 507.500h329M392 290.500h68M454.500 291v164M392 455.500h68M392 290l48-33M504 455l48-33M436 260l111 165M257 350l17 41M392 290l17 41M272 386l135-60M257 350l-39-29M174 455l-40-30M220 323l-82 104M267 219l48 55"/>
<path d="M234.500 378.500A98 98 0 0 1 272.500 455M309 283.500A85 85 0 0 1 334 316M315 274q18 9 34 12.500q18-3 33-10"/>
</g>
<g stroke="#fff"><path d="M174.500 455.500h330L350.500 231.500zM257 350l135-59.500M566.500 460.500h330L783.500 295.500 648 356.500z"/></g>
<g>${arrow(175, 507.5, 0)}${arrow(504, 507.5, 180)}${arrow(454.5, 291, 90)}${arrow(454.5, 455, -90)}${arrow(436, 260, 56)}${arrow(547, 425, -124)}${arrow(272, 386, -24)}${arrow(407, 326, 156)}${arrow(220, 323, 128)}${arrow(139, 427, -52)}${arrow(235, 379, 42)}${arrow(272.5, 455, -93)}${arrow(309, 283, 46)}${arrow(334, 316, -118)}${arrow(315, 274, 24)}${arrow(382, 277, 160)}</g>
<g class="dims">${dim('80', 339, 498, 0)}${dim('40', 445, 373, -90)}${dim('36', 336, 346, -24)}${dim('32.1791', 172, 369, -52)}${dim('48.4287', 501, 337, 56)}${dim('28°', 336, 298, 56)}${dim('52°', 270, 405, 67)}${dim('72.314°', 293, 234, 49)}</g>
<g class="axis" stroke="#fff"><path d="M16.500 558.500h8v8h-8zM20.500 558v-37M16.500 521h8L20.500 510zM25 562.500h38M63.500 559.500v6l10.500-3z"/><text x="22" y="502">Y</text><text x="86" y="568">X</text></g>
</svg>
<g stroke="#fff"><path d="M209.500 0v2000M0 105.500h3000M205.500 101.500h8v8h-8z"/></g>
</svg>`);

define('cad-tabs', `
:host{display:flex;flex:none;height:16px;background:#d4d0c8;padding-left:1px}
.nav{width:18px;height:16px;display:flex;align-items:center;justify-content:center}
.tab{position:relative;height:15px;line-height:15px;width:42px;text-align:center;margin-left:-2px}
.tab svg{position:absolute;inset:0}
.tab span{position:relative}
.tab.on{color:#fff;margin-left:2px}
`, () => {
  const n = d => `<button class="nav up" type="button"><svg width="12" height="10" viewBox="0 0 12 10">${d}</svg></button>`;
  const t = (s, on) => `<button type="button" class="tab${on ? ' on' : ''}"><svg width="42" height="15" viewBox="0 0 42 15"><path d="M0 0l6 14.500h30L42 0" fill="${on ? '#000' : '#d4d0c8'}" stroke="#000"/></svg><span>${mix(s)}</span></button>`;
  return n('<path d="M2 0h1.500v10H2zM9 0v10L4 5z"/>') + n('<path d="M8 0v10L3 5z"/>') + n('<path d="M4 0v10l5-5z"/>') + n('<path d="M3 0v10l5-5zM8.500 0H10v10H8.500z"/>') + t('模型', 1) + t('布局1') + t('布局2');
});

define('cad-workspace', `
:host{flex:1 1 0;min-height:0;display:flex;overflow:hidden}
.view{flex:1 1 0;min-width:0;display:flex;flex-direction:column;border:1px solid;border-color:#404040 #fff #fff #404040;margin-left:1px}
.side{flex:none;width:26px;overflow:hidden}
`, `
<div class="view"><cad-drawing></cad-drawing><cad-tabs></cad-tabs></div>
<div class="side"><cad-toolbar column>${tools('line xline pline polygon rect arc circle cloud spline ellipse ellarc insert block point hatch gradient region table mtext')}</cad-toolbar></div>
<div class="side"><cad-toolbar column>${tools('erase copyo mirror offset array move rotate scale stretch trim extend breakpt brk join chamfer fillet explode')}</cad-toolbar><cad-toolbar column>${tools('front backo above')}</cad-toolbar></div>`);

define('cad-bottombars', `
:host{flex:none;border-top:1px solid #fff;padding-bottom:3px;border-bottom:2px solid #000}
.row{display:flex;gap:1px;height:27px;margin-bottom:1px}
.row:last-child{margin:0}
`, `
<div class="row"><cad-toolbar>${tools('ucs ucsdlg | ucsprev | world ucsobj ucsface ucsview | origin zaxis point3 | rotX rotY rotZ | ucsapply')}</cad-toolbar></div>
<div class="row">
<cad-toolbar>${tools('wire2 wire3 hidden flat gouraud flatedge gouraudedge')}</cad-toolbar>
<cad-toolbar>${tools('pan zoomrt orbit corbit swivel distance clip frontclip backclip |')}<cad-combo label="视图" style="--w:139px"></cad-combo></cad-toolbar>
<cad-toolbar>${tools('namedv | top bottom left right frontv backv | sw se ne nw | camera |')}<cad-combo off label="命名视图" style="--w:138px"></cad-combo></cad-toolbar>
</div>`);

define('cad-command', `
:host{flex:none;display:flex;padding:4px 8px 1px 6px;font-size:14px}
.c{font-size:15px;line-height:14px}
.grip{display:flex;gap:1px;margin:2px 2px 2px 0}
.grip i{width:4px;border:1px solid;border-color:#fff #808080 #808080 #fff}
.panel{flex:1;min-width:0;border:1px solid;border-color:#808080 #fff #fff #404040}
.log{display:flex;height:32px;background:#fff;border-top:1px solid #000;border-bottom:1px solid #808080}
.log div:first-child{flex:1;min-width:0;padding-left:1px}
p{margin:0;line-height:14px;height:14px;white-space:pre}
.v{flex:none;width:16px;display:flex;flex-direction:column}
.v .up{flex:1}
.up{display:flex;align-items:center;justify-content:center}
.in{display:flex;height:16px;background:#fff}
label{line-height:15px;padding-left:1px}
input{flex:1;min-width:0;outline:0}
.h{display:flex;width:62px}
.h .up{width:16px}
.h .gap{flex:1;background:#e9e7e3}
.end{width:16px;background:#d4d0c8}
`, () => {
  const t = d => `<svg width="8" height="8" viewBox="0 0 8 8"><path d="${d}"/></svg>`;
  return `<div class="grip"><i></i><i></i></div><div class="panel">
<div class="log"><div><p>${mix('指定窗口的角点，输入比例因子')} (nX ${mix('或')} nXP)${mix('，或者')}</p><p>${mix('[全部(A)/中心(C)/动态(D)/范围(E)/上一个(P)/比例(S)/窗口(W)/对象(O)] ')}&lt;${mix('实时')}&gt;: a</p></div>
<div class="v"><button class="up" aria-label="up">${t('M1 5h6L4 2z')}</button><button class="up" aria-label="down">${t('M1 3h6L4 6z')}</button></div></div>
<div class="in"><label for="cmd">${mix('命令')}:</label><input id="cmd"><div class="h"><button class="up" aria-label="left">${t('M5 1v6L2 4z')}</button><span class="up"></span><span class="gap"></span><button class="up" aria-label="right">${t('M3 1v6l3-3z')}</button></div><span class="end"></span></div></div>`;
});

define('cad-status', `
:host{flex:none;display:flex;align-items:center;gap:4px;height:24px;padding-left:4px;border-top:1px solid #fff}
output{width:251px;height:19px;line-height:18px;color:#808080;padding-left:1px;border:1px solid;border-color:#808080 #fff #fff #808080;box-shadow:inset 0 0 0 1px #c4c0b8}
button{height:19px;line-height:16px;padding:0 1px;border:1px solid;border-color:#fff #808080 #808080 #fff}
button.on{border-color:#000 #fff #fff #000;background:#e4e1dc}
.lock{margin-left:auto;width:24px;height:19px;display:flex;align-items:center;justify-content:center;border:1px solid;border-color:#808080 #fff #fff #808080}
.arr{border:4px solid transparent;border-top-color:#000;border-bottom:0;margin:6px 0 0 1px}
.rs{align-self:flex-end;margin-left:3px}
`, () => '<output>84.0600, 39.3276, 0.0000</output>' +
  [['捕捉'], ['栅格'], ['正交'], ['极轴'], ['对象捕捉', 1], ['对象追踪', 1], ['DYN'], ['线宽'], ['模型', 1]].map(b => `<button type="button"${b[1] ? ' class="on"' : ''}>${mix(b[0])}</button>`).join('') +
  `<span class="lock">${svg('lock')}</span><i class="arr"></i><svg class="rs" width="13" height="13" viewBox="0 0 13 13"><path d="M1 12 12 1M5 12l7-7M9 12l3-3" stroke="#808080" stroke-width="1.500"/></svg>`);

define('cad-taskbar', `
:host{flex:none;display:flex;align-items:center;height:30px;background:#d4d0c8;border-top:1px solid #fff;padding:0 2px}
button{height:22px;display:flex;align-items:center;line-height:20px}
.start{width:47px;padding-left:2px;gap:1px}
.bar{flex:none;width:3px;height:20px;border:1px solid;border-color:#fff #808080 #808080 #fff}
.start + .bar{margin-left:7px}
.quick{flex:none;display:flex;gap:5px;margin-left:6px;width:132px;align-items:center}
.quick b{margin-left:auto;font-size:14px;align-self:flex-start;line-height:10px;padding-right:5px}
.task{flex:0 1 160px;min-width:0;gap:4px;padding-left:5px;margin-left:3px;overflow:hidden}
.task.on{background:#ebe9e5;border-color:#404040 #fff #fff #404040;box-shadow:inset 1px 1px #808080}
.tray{display:flex;align-items:center;height:24px;width:115px;padding:0 9px 0 4px;border:1px solid;border-color:#808080 #fff #fff #808080;gap:3px}
.tray time{margin-left:auto}
.tray b{font-size:12px}
.kb{margin:0 4px 0 6px}
.push{flex:1}
`, () => `<button class="start up" type="button">${svg('flag', 16)}${mix('开始')}</button><span class="bar"></span>
<div class="quick">${svg('ie')}${svg('desktop')}${svg('findfolder')}${svg('findred')}<b>»</b></div><span class="bar"></span>
<button class="task up on" type="button">${svg('cad', 15)}<span>AutoCAD 2006 - [Dra...</span></button>
<button class="task up" type="button">${svg('folder', 16)}<span>${mix('浙江天马余热发电')}</span></button>
<span class="push"></span><span class="bar"></span><span class="kb">${svg('keyboard', 14)}</span>
<div class="tray"><b>«</b>${svg('kav', 16)}${svg('net', 16)}${svg('power', 15)}<time>9:45</time></div>`);

define('cad-window', `
:host{flex:1 1 0;min-height:0;display:flex;flex-direction:column;margin:2px 4px 0 2px;padding:2px;background:#d4d0c8;border:2px solid;border-color:#d4d0c8 #404040 #404040 #d4d0c8;box-shadow:inset 1px 1px #fff,inset -1px -1px #808080}
`, `<cad-titlebar></cad-titlebar><cad-menubar></cad-menubar><cad-topbars></cad-topbars><cad-workspace></cad-workspace><cad-bottombars></cad-bottombars><cad-command></cad-command><cad-status></cad-status>`);

define('cad-app', `:host{display:flex;flex-direction:column;height:100vh}`, `<cad-window></cad-window><cad-taskbar></cad-taskbar>`);
</script>
</body>
</html>
